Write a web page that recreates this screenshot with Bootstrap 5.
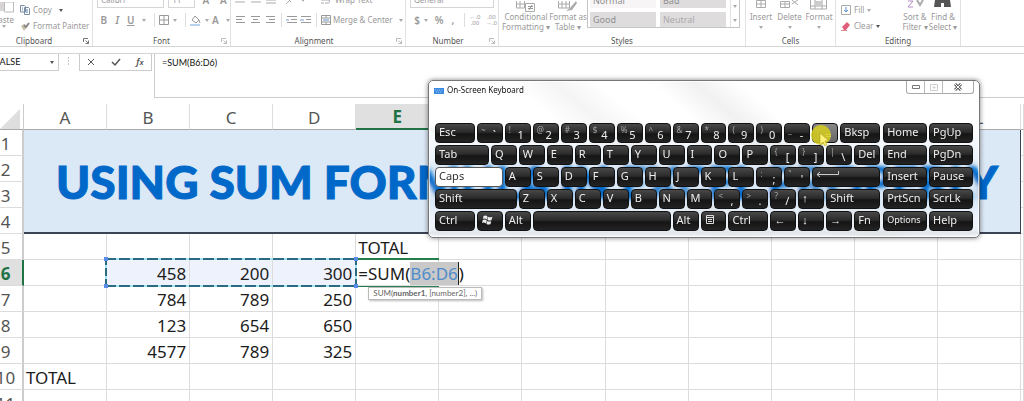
<!DOCTYPE html>
<html lang="en">
<head>
<meta charset="utf-8">
<meta name="viewport" content="width=device-width, initial-scale=1">
<title>Spreadsheet with on-screen keyboard</title>
<link href="https://cdn.jsdelivr.net/npm/bootstrap@5.3.0/dist/css/bootstrap.min.css" rel="stylesheet">
<style>
  body { font-family: "Noto Sans", "Open Sans", sans-serif; background: #fff; color: #222; overflow: hidden; height: 100vh; }
  button, input, select { font-family: inherit; }

  /* ribbon */
  .ribbon { height: 47px; overflow: hidden; border-bottom: 1px solid #d4d4d4; font-size: 8px; line-height: 10px; color: #999; }
  .ribbon button { border: 0; background: none; padding: 0; color: inherit; font-size: 8px; line-height: 10px; white-space: nowrap; }
  .ribbon svg, .fx svg { display: block; flex: none; }
  .rgroup { height: 47px; position: relative; border-right: 1px solid #e2e2e2; flex: none; }
  .rgroup .launch { position: absolute; right: 3px; bottom: 2px; }
  .rlabel { color: #555; text-align: center; height: 12px; line-height: 12px; margin-top: 3px; }
  .rbody { height: 32px; overflow: hidden; }
  .w-clip { width: 93px; } .w-font { width: 138px; } .w-align { width: 175px; } .w-num { width: 93px; }
  .w-styles { width: 247px; } .w-cells { width: 90px; } .w-edit { width: 125px; }
  .line { height: 16px; }
  .dark { color: #444; }
  .caret { width: 0; height: 0; border: 2px solid transparent; border-top: 3px solid #aaa; border-bottom: 0; flex: none; }
  .dark .caret, .caret.dk { border-top-color: #555; }
  .vsep { width: 1px; height: 14px; background: #ddd; flex: none; }
  .pick { height: 16px; border: 1px solid #d5d5d5; background: #fff; color: #999; font-size: 8px; line-height: 10px; padding: 0 3px; appearance: none; }
  .gallery { border: 1px solid #c4c4c4; width: 153px; height: 38px; padding: 2px; gap: 4px; margin-bottom: 4px; }
  .gallery .swatch { width: 66px; height: 15px; background: #dedcdd; font-size: 9px; line-height: 14px; text-align: left; padding-left: 3px; color: #8f8f8f; }
  .ribbon .glyph { font-size: 10px; font-weight: 600; width: 14px; text-align: center; }

  /* formula bar */
  .fbar { margin-top: 6px; border-top: 1px solid #d4d4d4; height: 45px; }
  .box { border: 1px solid #ccc; border-top: 0; height: 17px; }
  .namebox { width: 59px; border-left: 0; }
  .fbar input { border: 0; padding: 0; background: none; font: 9px/16px Lato, "Noto Sans", sans-serif; color: #111; outline: 0; min-width: 0; }
  .fbar button { border: 0; background: none; padding: 0; color: #555; }
  .fx { width: 73px; margin-left: 20px; }
  .formula { border: 1px solid #ccc; border-top: 0; border-right: 0; height: 44px; margin-left: 2px; padding-left: 7px; }
  .formula input { height: 17px; width: 100%; display: block; }

  /* worksheet */
  .sheet { table-layout: fixed; width: 100%; border-collapse: separate; border-spacing: 0; font-size: 17px; line-height: 23px; margin-top: 6px; color: #1c1c1c; }
  .sheet th { font-weight: 400; color: #555; text-align: center; padding: 2px 0 0; }
  .sheet thead th { height: 26px; border-right: 1px solid #ddd; border-bottom: 1px solid #aaa; }
  .sheet thead th.corner { border-right-color: #ccc; padding: 0; }
  .sheet td { height: 26px; padding: 2px 3px 0 2px; border-right: 1px solid #dcdcdc; border-bottom: 1px solid #dcdcdc; white-space: nowrap; }
  .sheet tbody th { height: 26px; border-right: 2px solid #ccc; border-bottom: 1px solid #dcdcdc; }
  .sheet tbody th div { width: 11px; display: flex; justify-content: center; }
  .sheet .num { text-align: right; }
  .c-head { width: 24px; } .c-last { width: 3px; }
  .sheet thead th.on { background: #e0e0e0; color: #217346; font-weight: 700; border-bottom: 2px solid #217346; line-height: 22px; }
  .sheet tbody th.on { background: #e0e0e0; color: #217346; font-weight: 700; border-right-color: #217346; }
  .sheet td.banner { background: #dbe8f5; border-bottom: 2px solid #3a4452; border-right: 1px solid #3a4452; text-align: left; padding: 2px 0 0 32px; overflow: hidden;
    font: 900 46px/60px "Lato Black", Lato, "Open Sans", sans-serif; color: #0068c9; -webkit-text-stroke: 1px #0068c9; }
  .sheet td.range { background: #eef2fc; }
  .ants { position: absolute; left: -2px; top: -2px; width: calc(300% + 6px); height: 29px; pointer-events: none; z-index: 1;
    background:
      repeating-linear-gradient(90deg, #2b6b82 0 11px, #a5e4ec 11px 14px) 0 0 / 100% 2px no-repeat,
      repeating-linear-gradient(90deg, #2b6b82 0 11px, #a5e4ec 11px 14px) 0 100% / 100% 2px no-repeat,
      repeating-linear-gradient(0deg, #2b6b82 0 8px, #a5e4ec 8px 11px) 0 0 / 2px 100% no-repeat,
      repeating-linear-gradient(0deg, #2b6b82 0 8px, #a5e4ec 8px 11px) 100% 0 / 2px 100% no-repeat; }
  .ants i { position: absolute; width: 4px; height: 4px; background: #5b8be8; }
  .editing { position: relative; box-shadow: 0 -2px #217f4b, 0 1px #217f4b; }
  .editing .entry { position: relative; background: #fff; display: inline-block; height: 23px; line-height: 23px; vertical-align: top; }
  .editing .pickd { display: inline-block; background: #c9c9c9; color: #4f8ccb; border-right: 1px solid #222; height: 23px; }
  .hint { position: absolute; left: 12px; top: 27px; z-index: 2; background: #fff; border: 1px solid #bbb; box-shadow: 1px 1px 2px #bbb; color: #666; font: 8px/11px Lato, "Noto Sans", sans-serif; padding: 0 4px; height: 13px; }

  /* on-screen keyboard window */
  .osk { position: absolute; left: 428px; top: 80px; width: 552px; height: 158px; padding: 0 6px 6px; border: 1px solid #777; border-radius: 5px; overflow: hidden; z-index: 3;
    box-shadow: 0 0 5px rgba(0,0,0,.5), inset 0 0 0 1px rgba(255,255,255,.7);
    background: linear-gradient(40deg, transparent 0 36%, rgba(225,225,225,.35) 42%, transparent 48% 55%, rgba(215,215,215,.35) 61%, transparent 67%),
      linear-gradient(#fff 0 24%, rgba(255,255,255,.85) 32%, rgba(245,248,252,.65) 50%, rgba(245,248,252,0) 56% 78%, rgba(245,248,252,.75) 88%);
    backdrop-filter: blur(2px); }
  .osk-bar { height: 42px; font: 8px/18px "Noto Sans", sans-serif; color: #111; }
  .capbtns { border: 1px solid #aaa; border-top: 0; border-radius: 0 0 3px 3px; height: 13px; margin-right: -1px; }
  .capbtns button { border: 0; border-right: 1px solid #bbb; background: none; padding: 0; display: flex; align-items: center; justify-content: center; width: 18px; }
  .capbtns button:last-child { border: 0; width: 30px; }
  .keys, .side { display: grid; gap: 2px; grid-auto-rows: 20px; }
  .keys { grid-template-columns: repeat(32, 1fr); flex: 446 1 0; }
  .side { grid-template-columns: 1fr 1fr; flex: 90 1 0; }
  .kbd-key { position: relative; min-width: 0; border: 1px solid #111; border-radius: 4px; padding: 1px 0 0 3px; background: linear-gradient(#484848, #2b2b2b 45%, #151515 55%, #232323);
    color: #eee; font-size: 11px; line-height: 14px; text-align: left; white-space: nowrap; display: flex; align-items: flex-start; }
  .kbd-key.caps { background: #fff; color: #333; border-color: #555; }
  .kbd-key.hot { background: linear-gradient(#888, #666); }
  .kbd-key.small-t { font-size: 9px; }
  .kbd-key .alt { color: #a5a5a5; font-size: 8px; line-height: 10px; }
  .kbd-key .main-c { position: absolute; right: 6px; bottom: 0; line-height: 14px; }
  .u2 { grid-column: span 2; } .u3 { grid-column: span 3; } .u4 { grid-column: span 4; } .u5 { grid-column: span 5; } .u6 { grid-column: span 6; } .u10 { grid-column: span 10; }
  .pointer { position: absolute; left: 381px; top: 43px; }
</style>
</head>
<body>
<header>
  <div class="ribbon d-flex">
    <section class="rgroup w-clip">
      <div class="rbody d-flex">
        <button class="d-flex flex-column align-items-end justify-content-end pb-1" style="width:14px">
          <svg width="14" height="11" viewBox="0 0 14 11"><path d="M0 0h9v9H0z" fill="#d8d4d8"/><path d="M4.500 0h9v10h-9z" fill="#fff" stroke="#bbb"/></svg>
          <span style="height:12px;line-height:13px">Paste</span><span class="caret me-2"></span>
        </button>
        <div class="d-flex flex-column" style="margin-left:6px">
          <button class="d-flex align-items-center dark" style="height:20px;gap:3px"><svg width="10" height="10" viewBox="0 0 10 10"><path d="M.5.5h4l1 1V7h-5zM4.500 2.500h4l1 1v6h-5z" fill="#fff" stroke="#7d8ca0"/><path d="M6 5h2M6 7h2M2 3h1M2 5h1" stroke="#4d86c4"/></svg>Copy<span class="caret ms-1"></span></button>
          <button class="d-flex align-items-center" style="height:12px;gap:3px"><svg width="10" height="9" viewBox="0 0 10 9"><path d="M1 4l3-2 3 3-3 4z" fill="#c9bfa8"/><path d="M4 3l2 2 3-4" fill="none" stroke="#888" stroke-width="2"/></svg>Format Painter</button>
        </div>
      </div>
      <div class="rlabel pe-4">Clipboard</div>
      <button class="launch" aria-label="Clipboard options"><svg width="6" height="8" viewBox="0 0 6 6"><path d="M.5 4V.5H5M2.500 2.500l3 3M5.500 2.500v3h-3" fill="none" stroke="#777"/></svg></button>
    </section>
    <section class="rgroup w-font">
      <div class="rbody d-flex flex-column justify-content-end">
        <div class="line d-flex align-items-center ps-1 gap-1 flex-shrink-0" style="margin-bottom:4px">
          <select class="pick" style="width:70px" aria-label="Font"><option>Calibri</option></select>
          <select class="pick" style="width:28px" aria-label="Font size"><option>11</option></select>
          <button class="glyph">A</button><button class="glyph">A</button>
        </div>
        <div class="line d-flex align-items-center ps-1 mb-1 flex-shrink-0">
          <button class="glyph">B</button><button class="glyph fst-italic">I</button><button class="glyph text-decoration-underline">U</button><span class="caret ms-1"></span>
          <span class="vsep ms-2 me-1"></span>
          <button aria-label="Borders"><svg width="10" height="10" viewBox="0 0 10 10"><path d="M.5.5h9v9h-9zM5 .5v9M.5 5h9" fill="none" stroke="#999"/></svg></button><span class="caret ms-1"></span>
          <span class="vsep ms-2 me-1"></span>
          <button aria-label="Fill colour"><svg width="11" height="11" viewBox="0 0 11 11"><path d="M2 5l3-4 4 4-3 3z" fill="none" stroke="#999"/><path d="M9 5l1 3" stroke="#999"/><path d="M0 9h10v2H0z" fill="#b9d3ee"/></svg></button><span class="caret ms-1"></span>
          <button class="glyph">A</button><span class="caret ms-1"></span>
        </div>
      </div>
      <div class="rlabel">Font</div>
      <button class="launch" aria-label="Font options"><svg width="6" height="8" viewBox="0 0 6 6"><path d="M.5 4V.5H5M2.500 2.500l3 3M5.500 2.500v3h-3" fill="none" stroke="#bbb"/></svg></button>
    </section>
    <section class="rgroup w-align">
      <div class="rbody d-flex flex-column justify-content-end">
        <div class="line d-flex align-items-center ps-1 flex-shrink-0" style="margin-bottom:4px">
          <svg width="46" height="10" viewBox="0 0 46 10"><path d="M0 1h10M0 4h10M0 7h10M16 1h10M16 4h10M16 7h10M31 5h10M31 8h10" stroke="#aaa"/></svg>
          <svg class="ms-1" width="12" height="10" viewBox="0 0 12 10"><path d="M1 9l8-8M3 4l3 3" stroke="#aaa"/></svg><span class="caret ms-1"></span>
          <button class="d-flex gap-1 ms-3"><svg width="10" height="10" viewBox="0 0 10 10"><path d="M0 2h10M0 5h8q2 3-2 3H4M0 8h3" fill="none" stroke="#aaa"/></svg>Wrap Text</button>
        </div>
        <div class="line d-flex align-items-center ps-1 mb-1 flex-shrink-0">
          <svg width="42" height="9" viewBox="0 0 42 9"><path d="M1 .5h9M1 3.500h6M1 6.500h9M16 .5h9M18 3.500h5M16 6.500h9M31 .5h9M34 3.500h6M31 6.500h9" stroke="#999"/></svg>
          <span class="vsep ms-1 me-1"></span>
          <svg width="26" height="9" viewBox="0 0 26 9"><path d="M1 .5h10M5 3.500h6M1 6.500h10M15 .5h10M20 3.500h5M15 6.500h10" stroke="#999"/><path d="M0 4h3M14 4h4" stroke="#7397c4"/></svg>
          <span class="vsep ms-1 me-1"></span>
          <button class="d-flex align-items-center" style="gap:2px"><svg width="10" height="10" viewBox="0 0 10 10"><path d="M.5.5h9v9h-9zM.5 3h9M.5 7h9M5 0v3M5 7v3" fill="#fff" stroke="#999"/><path d="M2 5h6" stroke="#5b8fd0"/></svg>Merge &amp; Center<span class="caret ms-1"></span></button>
        </div>
      </div>
      <div class="rlabel pe-2">Alignment</div>
      <button class="launch" aria-label="Alignment options"><svg width="6" height="8" viewBox="0 0 6 6"><path d="M.5 4V.5H5M2.500 2.500l3 3M5.500 2.500v3h-3" fill="none" stroke="#bbb"/></svg></button>
    </section>
    <section class="rgroup w-num">
      <div class="rbody d-flex flex-column justify-content-end">
        <div class="line d-flex px-1 flex-shrink-0" style="margin-bottom:4px"><select class="pick w-100" aria-label="Number format"><option>General</option></select></div>
        <div class="line d-flex align-items-center ps-1 mb-1 flex-shrink-0">
          <button class="glyph">$</button><span class="caret me-1"></span><button class="glyph">%</button><button class="glyph">,</button>
          <span class="vsep ms-1 me-1"></span>
          <button style="width:12px;font-size:6px;line-height:6px" class="text-wrap">←.0 .00</button><button style="width:13px;font-size:6px;line-height:6px" class="text-wrap ms-1">.00 →.0</button>
        </div>
      </div>
      <div class="rlabel pe-2">Number</div>
      <button class="launch" aria-label="Number options"><svg width="6" height="8" viewBox="0 0 6 6"><path d="M.5 4V.5H5M2.500 2.500l3 3M5.500 2.500v3h-3" fill="none" stroke="#bbb"/></svg></button>
    </section>
    <section class="rgroup w-styles">
      <div class="rbody d-flex align-items-end">
        <button class="ms-1 d-flex flex-column align-items-center" style="width:46px"><svg width="20" height="11" viewBox="0 0 20 11"><path d="M.5 0v7h8V0M4 0v7M0 3h8" fill="none" stroke="#aaa"/><path d="M9.500 2.500h9v8h-9z" fill="#fff" stroke="#aaa"/><path d="M12 5.500h5M12 7.500h5M16 4l-3 5" stroke="#999"/></svg>Conditional<span>Formatting ▾</span></button>
        <button class="d-flex flex-column align-items-center" style="width:38px"><svg width="20" height="11" viewBox="0 0 20 11"><path d="M.5 0v7h11V0M4 0v7M8 0v7M0 3h11" fill="none" stroke="#aaa"/><path d="M18 0l-6 7-4 3 6-1 5-7z" fill="#aaa"/></svg>Format as<span>Table ▾</span></button>
        <div class="gallery d-flex flex-wrap position-relative">
          <button class="swatch" style="background:#f7f5f6">Normal</button><button class="swatch">Bad</button>
          <button class="swatch">Good</button><button class="swatch" style="color:#aaa">Neutral</button>
          <span class="position-absolute end-0 top-0 h-100 d-flex flex-column align-items-center justify-content-around border-start pt-2" style="width:9px"><span class="caret"></span><span class="caret"></span></span>
        </div>
      </div>
      <div class="rlabel">Styles</div>
    </section>
    <section class="rgroup w-cells">
      <div class="rbody d-flex align-items-start justify-content-center gap-1">
        <button class="d-flex flex-column align-items-center" style="width:24px"><svg width="11" height="12" viewBox="0 0 11 12"><path d="M.5.5h9v7h-9zM5 0v8M0 4h9" fill="none" stroke="#aaa"/></svg>Insert<span class="caret mt-1"></span></button>
        <button class="d-flex flex-column align-items-center" style="width:25px"><svg width="20" height="12" viewBox="0 0 20 12"><path d="M.5 1.500h9v6h-9zM5 1v7M0 4h9M12 0l6 5M18 0l-6 4" fill="none" stroke="#aaa"/></svg>Delete<span class="caret mt-1"></span></button>
        <button class="d-flex flex-column align-items-center" style="width:26px"><svg width="18" height="12" viewBox="0 0 18 12"><path d="M.5 0v9h16V0M5 0v9M12 0v9M0 6h17" fill="none" stroke="#aaa"/><path d="M5 1h7v5H5z" fill="#ccc"/></svg>Format<span class="caret mt-1"></span></button>
      </div>
      <div class="rlabel">Cells</div>
    </section>
    <section class="rgroup w-edit">
      <div class="rbody d-flex">
        <div class="d-flex flex-column" style="width:65px;padding-left:5px">
          <button class="d-flex align-items-center" style="height:20px;gap:3px"><svg width="10" height="10" viewBox="0 0 10 10"><path d="M.5.5h9v9h-9z" fill="#fff" stroke="#aaa"/><path d="M5 2v5M3 5l2 2 2-2" fill="none" stroke="#5b8fd0"/></svg>Fill<span class="caret"></span></button>
          <button class="d-flex align-items-center dark" style="height:12px;gap:3px"><svg width="10" height="9" viewBox="0 0 10 9"><path d="M1 5l5-5 3 3-4 5H3z" fill="#e0607c"/><path d="M0 8.500h6" stroke="#d88"/></svg>Clear<span class="caret"></span></button>
        </div>
        <button class="d-flex flex-column align-items-center" style="width:28px"><svg width="20" height="12" viewBox="0 0 20 12"><path d="M3 1h5L3 7h5" fill="none" stroke="#b48bc9"/><path d="M12 0l3 5 3-5" fill="none" stroke="#aaa" stroke-width="2"/></svg>Sort &amp;<span>Filter ▾</span></button>
        <button class="d-flex flex-column align-items-center dark" style="width:28px"><svg width="18" height="12" viewBox="0 0 18 12"><path d="M1 0h6v7H0zM10 0h6l1 7h-7zM7 0h3v3H7z" fill="#555"/></svg>Find &amp;<span>Select ▾</span></button>
      </div>
      <div class="rlabel">Editing</div>
    </section>
  </div>

  <div class="fbar d-flex">
    <div class="box namebox d-flex align-items-center overflow-hidden">
      <input class="flex-fill" style="margin-left:-5px" value="FALSE" aria-label="Name box"><span class="caret dk me-1"></span>
    </div>
    <div class="box fx d-flex align-items-center justify-content-around position-relative">
      <svg class="position-absolute" style="left:-12px" width="2" height="10" viewBox="0 0 2 10"><path d="M0 1h1M0 4h1M0 7h1" stroke="#888" stroke-width="1"/></svg>
      <button aria-label="Cancel"><svg width="9" height="9" viewBox="0 0 9 9"><path d="M1 1l6 6M7 1L1 7" stroke="#555"/></svg></button>
      <button aria-label="Enter"><svg width="10" height="9" viewBox="0 0 10 9"><path d="M1 4l3 3 5-6" fill="none" stroke="#555" stroke-width="1.500"/></svg></button>
      <button class="fst-italic fw-semibold" style="font-size:9px" aria-label="Insert function">f<small>x</small></button>
    </div>
    <div class="formula flex-fill"><input value="=SUM(B6:D6)" aria-label="Formula"></div>
  </div>
</header>

<main>
  <table class="sheet">
    <colgroup><col class="c-head"><col span="12"><col class="c-last"></colgroup>
    <thead><tr id="cols"><th class="corner"><svg class="d-block ms-auto me-1 mt-1" width="20" height="20" viewBox="0 0 20 20"><path d="M20 0v20H0z" fill="#dedede"/></svg></th></tr></thead>
    <tbody id="rows"></tbody>
  </table>
</main>

<div class="osk" role="dialog" aria-label="On-Screen Keyboard">
  <div class="osk-bar d-flex align-items-start">
    <svg style="margin:7px 3px 0 -1px" width="10" height="6" viewBox="0 0 10 6"><path d="M0 0h10v6H0z" fill="#3b8be0"/><path d="M1 2h8M2 4h6" stroke="#9cc8f5" stroke-dasharray="1 1"/></svg>
    <span>On-Screen Keyboard</span>
    <div class="capbtns d-flex ms-auto">
      <button aria-label="Minimise"><svg width="8" height="4" viewBox="0 0 8 4"><path d="M.5.5h7v3h-7z" fill="none" stroke="#777"/></svg></button>
      <button aria-label="Maximise"><svg width="8" height="7" viewBox="0 0 8 7"><path d="M.5.5h7v6h-7zM3 3h2v1H3z" fill="none" stroke="#ccc"/></svg></button>
      <button aria-label="Close"><svg width="8" height="8" viewBox="0 0 8 8"><path d="M1 1l6 6M7 1L1 7" stroke="#666" stroke-width="3"/><path d="M1 1l6 6M7 1L1 7" stroke="#fff"/></svg></button>
    </div>
  </div>
  <div class="d-flex" style="gap:3px">
    <div class="keys" id="keys"></div>
    <div class="side" id="side"></div>
  </div>
  <svg class="pointer" width="24" height="26" viewBox="0 0 24 26"><circle cx="11" cy="11" r="10" fill="#d8cf1c" opacity=".85"/><path d="M10 9v12l3-3 2 4 2-1-2-4h4z" fill="#fff27a" stroke="#a79d20" stroke-width=".6"/></svg>
</div>

<script src="https://cdn.jsdelivr.net/npm/bootstrap@5.3.0/dist/js/bootstrap.bundle.min.js"></script>
<script>
  const letters = 'ABCDEFGHIJKL'.split('');
  document.getElementById('cols').innerHTML += letters.map(c => `<th${c === 'E' ? ' class="on"' : ''}>${c}</th>`).join('') + '<th></th>';

  const cells = {
    E5: 'TOTAL', B6: 458, C6: 200, D6: 300, B7: 784, C7: 789, D7: 250,
    B8: 123, C8: 654, D8: 650, B9: 4577, C9: 789, D9: 325, A10: 'TOTAL'
  };
  const ants = '<div class="ants"><i style="left:-1px;top:-1px"></i><i style="right:-1px;top:-1px"></i><i style="left:-1px;bottom:-1px"></i><i style="right:-1px;bottom:-1px"></i></div>';
  const entry = '<span class="entry">=SUM(<span class="pickd">B6:D6</span>)</span><div class="hint">SUM(<b>number1</b>, [number2], ...)</div>';
  let html = '';
  for (let r = 1; r <= 11; r++) {
    html += `<tr><th${r === 6 ? ' class="on"' : ''}><div>${r}</div></th>`;
    if (r === 1) html += '<td class="banner" colspan="12" rowspan="4">USING SUM FORMULA IN EXCEL PROPERLY</td>';
    if (r > 4) for (const c of letters) {
      const v = cells[c + r] ?? '';
      const cls = (typeof v === 'number' ? 'num ' : '') + (r === 6 && 'BCD'.includes(c) ? 'range ' : '') + (c + r === 'B6' ? 'position-relative' : '') + (c + r === 'E6' ? 'editing' : '');
      html += `<td class="${cls}">${c + r === 'E6' ? entry : v}${c + r === 'B6' ? ants : ''}</td>`;
    }
    html += '<td></td></tr>';
  }
  document.getElementById('rows').innerHTML = html;

  const win = '<svg width="11" height="10" viewBox="0 0 11 10" style="margin:2px 0 0 1px"><path d="M1.500 1q2-1 4 .5L5 4.500q-2-1.500-4-.5zM6 1.800q2 1 4.500 0L9.500 5q-2 1-4 0zM.8 5q2-1 4 .5L4 8.500Q2 7 0 8zM5.200 6q2 1 4 0L8.500 9q-2 1-4 0z" fill="#eee"/></svg>';
  const menu = '<svg width="8" height="9" viewBox="0 0 8 9" style="margin:2px 0 0 1px"><path d="M.5.500h7v8h-7zM0 2.500h8M2 4.500h4M2 6.500h4" fill="none" stroke="#ddd"/></svg>';
  const enter = '<svg width="24" height="8" viewBox="0 0 24 8" style="margin:2px 0 0 0"><path d="M22.500 0v3.500H1M4 1L1 3.500 4 6" fill="none" stroke="#ccc"/></svg>';
  // each key: [units, label] or [units, shifted sign, main sign]
  const rows = [
    [[3,'Esc'],[2,'~','`'],[2,'!','1'],[2,'@','2'],[2,'#','3'],[2,'$','4'],[2,'%','5'],[2,'^','6'],[2,'&amp;','7'],[2,'*','8'],[2,'(','9'],[2,')','0'],[2,'_','-'],[2,'+','=','hot'],[3,'Bksp']],
    [[4,'Tab'],...'QWERTYUIOP'.split('').map(k => [2,k]),[2,'{','['],[2,'}',']'],[2,'|','\\'],[2,'Del']],
    [[5,'Caps','','caps'],...'ASDFGHJKL'.split('').map(k => [2,k]),[2,':',';'],[2,'"',"'"],[5,enter]],
    [[6,'Shift'],...'ZXCVBNM'.split('').map(k => [2,k]),[2,'&lt;',','],[2,'&gt;','.'],[2,'?','/'],[2,'↑'],[4,'Shift']],
    [[3,'Ctrl'],[2,win],[2,'Alt'],[10,''],[2,'Alt'],[2,menu],[3,'Ctrl'],[2,'←'],[2,'↓'],[2,'→'],[2,'Fn']]
  ];
  document.getElementById('keys').innerHTML = rows.flat().map(([u, a, b, cls]) =>
    `<button class="kbd-key u${u} ${cls || ''}">${b ? `<span class="alt">${a}</span><span class="main-c">${b}</span>` : a}</button>`).join('');
  document.getElementById('side').innerHTML = ['Home','PgUp','End','PgDn','Insert','Pause','PrtScn','ScrLk','Options','Help'].map(k =>
    `<button class="kbd-key ${k === 'Options' ? 'small-t' : ''}">${k}</button>`).join('');
</script>
</body>
</html>
